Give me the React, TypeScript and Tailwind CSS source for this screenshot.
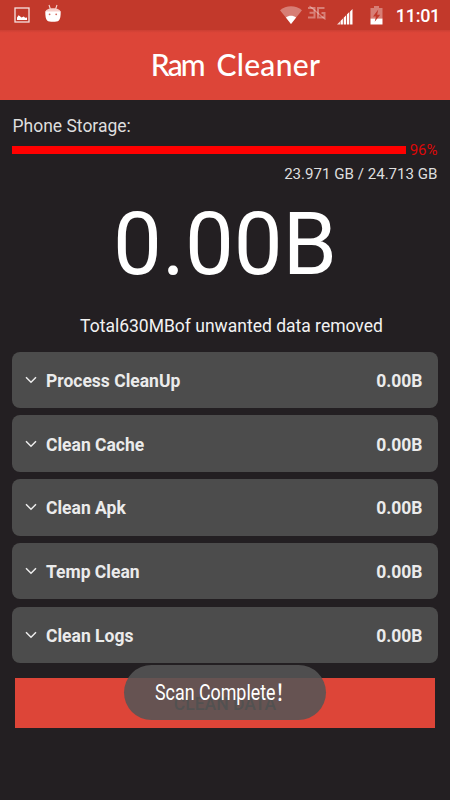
const ROWS = [
  { label: "Process CleanUp", size: "0.00B" },
  { label: "Clean Cache", size: "0.00B" },
  { label: "Clean Apk", size: "0.00B" },
  { label: "Temp Clean", size: "0.00B" },
  { label: "Clean Logs", size: "0.00B" },
]

function ImageIcon() {
  return (
    <svg width="16" height="16" viewBox="0 0 16 16">
      <rect x="1" y="1" width="14" height="14" fill="none" stroke="#fff" strokeOpacity="0.85" strokeWidth="1.3" />
      <path d="M3 13v-2.600l1.600-2.200 1.700 1.200 1.200 1.100 2.300-1 1.300 1.300L13 10.500V13z" fill="#fff" />
    </svg>
  )
}

function AndroidIcon() {
  return (
    <svg width="16" height="19" viewBox="0 0 16 19">
      <path d="M4 1l1.400 4M12 1l-1.400 4" stroke="#fff" strokeOpacity="0.8" strokeWidth="1.1" />
      <path d="M0.300 8C0.800 5.400 4 4.200 8 4.200s7.200 1.200 7.700 3.800z" fill="#f7cfca" />
      <path d="M0.300 7.500h15.400c0 4.500-.3 7.500-2.100 9.300-1.300 1.300-9.900 1.300-11.200 0C.6 15 .3 12 .3 7.500z" fill="#fff" />
      <circle cx="4.600" cy="10.300" r="0.900" fill="#d4685d" />
      <circle cx="11.200" cy="10.300" r="0.900" fill="#d4685d" />
    </svg>
  )
}

function WifiIcon() {
  return (
    <svg width="22" height="18" viewBox="0 0 22 18">
      <path d="M11 18L0 4.300C6-1.100 16-1.100 22 4.300z" fill="#fff" fillOpacity="0.35" />
      <path d="M11 18L5.900 11.500c3-2.400 7.200-2.400 10.200 0z" fill="#fff" />
    </svg>
  )
}

function NoDataIcon() {
  return (
    <svg width="20" height="16" viewBox="0 0 20 16" fill="none" stroke="#fff" strokeOpacity="0.35" strokeWidth="2">
      <path d="M1 3h6.500v9.500H1M2.500 7.700h5M17.500 3h-6.500v9.500h6.500V8h-3" />
      <path d="M2.500 1L18.500 14.500" strokeWidth="1.2" />
    </svg>
  )
}

function SignalIcon() {
  return (
    <svg width="16" height="16" viewBox="0 0 16 16" fill="#fff">
      <path d="M0 15.500L3 12.500V15.500z" fillOpacity="0.8" />
      <path d="M3.500 12l2.400-2.400v5.900H3.500zM6.700 8.700l2.400-2.400v9.200H6.700zM9.900 5.500l2.400-2.400v12.400H9.900zM13.100 2.400L15.500 0v15.500h-2.400z" />
    </svg>
  )
}

function BatteryIcon() {
  return (
    <svg width="13" height="19" viewBox="0 0 13 19">
      <path d="M4 0h5v2h3.500v10.500H.5V2H4z" fill="#fff" fillOpacity="0.35" />
      <path d="M.5 12.500h12V18.500H.5z" fill="#fff" />
      <path d="M8.300 3.500L3 10.600h3L4.700 15.700l5.500-7H7.100z" fill="#c2392b" />
    </svg>
  )
}

function Chevron() {
  return (
    <svg width="12" height="8" viewBox="0 0 12 8" fill="none" stroke="#ededed" strokeWidth="1.500">
      <path d="M1 1.200l5 5 5-5" />
    </svg>
  )
}

function StatusBar() {
  return (
    <div className="flex h-[30px] items-center bg-[#c2392b] pr-[10px] pl-[14px] text-white">
      <ImageIcon />
      <div className="-mt-[4px] ml-[15px]">
        <AndroidIcon />
      </div>
      <div className="ml-auto flex items-center">
        <WifiIcon />
        <div className="-mt-[5px] ml-[5px]">
          <NoDataIcon />
        </div>
        <div className="mt-[3px] ml-[10px]">
          <SignalIcon />
        </div>
        <div className="ml-[17px]">
          <BatteryIcon />
        </div>
        <span className="mt-[2px] ml-[13px] text-[18px] leading-none font-medium tracking-[-0.300px]">11:01</span>
      </div>
    </div>
  )
}

export default function App() {
  return (
    <div className="relative flex h-[800px] w-[450px] flex-col overflow-hidden bg-[#231f22] font-[Roboto,sans-serif]">
      <StatusBar />
      <header className="flex h-[70px] items-center justify-center bg-gradient-to-b from-[#cb3f33] from-0% to-[#dd4538] to-4% pl-[21px]">
        <h1 className="-mt-[2px] font-[Lato,sans-serif] text-[30px] leading-none font-medium tracking-[0.300px] text-white">
          <span className="tracking-[-1.800px]">Ram</span>
          <span className="tracking-[5px]"> </span>
          Cleaner
        </h1>
      </header>

      <main className="flex flex-col px-3">
        <div className="mt-[14px] pl-[0.500px] text-[17.500px] leading-[24px] text-[#dedede]">Phone Storage:</div>
        <div className="mt-[3px] flex h-[18px] items-center justify-between pr-[0.500px]">
          <div className="h-2 w-[394px] bg-[#ff0000]" />
          <span className="text-[15px] leading-none text-[#dd0808]">96%</span>
        </div>
        <div className="mt-[5px] pr-[0.500px] text-right text-[15.100px] leading-[20px] text-[#dedede]">
          23.971 GB / 24.713 GB
        </div>
        <div className="mt-[10px] text-center text-[87px] leading-[100px] text-white">0.00B</div>
        <div className="mt-[20px] pl-[13px] text-center text-[17.500px] leading-[24px] text-[#f2f2f2]">
          Total630MBof unwanted data removed
        </div>

        <ul className="mt-[13.500px] flex flex-col gap-[7.250px]">
          {ROWS.map((row) => (
            <li
              key={row.label}
              className="flex h-[56.500px] items-center rounded-lg bg-[#4c4c4c] pr-[15.500px] pl-[13px] text-[17.500px] font-bold text-[#ebebeb]"
            >
              <Chevron />
              <span className="ml-[9px] pt-[2.500px]">{row.label}</span>
              <span className="ml-auto pt-[2.500px]">{row.size}</span>
            </li>
          ))}
        </ul>

        <button className="mx-[3px] mt-[15px] h-[50px] bg-[#dd4538] pt-[2px] text-[17.500px] font-medium text-[#3a3030]">
          CLEAN DATA
        </button>
      </main>

      {/* toast */}
      <div className="absolute top-[665px] left-[124px] flex h-[55px] w-[202px] items-center rounded-full bg-[#555555]/88 pl-[31px] text-white">
        <span className="origin-left scale-x-[0.83] font-[Roboto,'Noto_Sans_CJK_SC',sans-serif] text-[21.500px] leading-[26px] whitespace-nowrap">
          Scan Complete<span className="font-medium">！</span>
        </span>
      </div>
    </div>
  )
}
